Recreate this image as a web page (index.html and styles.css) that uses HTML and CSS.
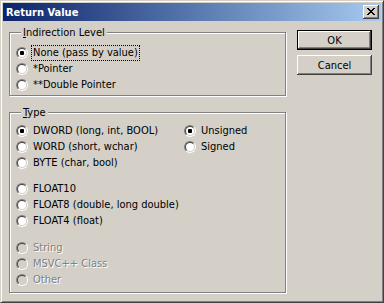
FILE: index.html
```html
<!DOCTYPE html>
<html lang="en">
<head>
  <meta charset="UTF-8">
  <meta name="viewport" content="width=device-width, initial-scale=1.0">
  <title>Return Value</title>
  <link rel="stylesheet" href="styles.css">
</head>
<body>
  <div class="window">
    <div class="titlebar">
      <span class="title">Return Value</span>
      <span class="close">
        <svg width="8" height="7" viewBox="0 0 8 7" shape-rendering="crispEdges">
          <path d="M0 0h2v1h-2zM6 0h2v1h-2zM1 1h2v1h-2zM5 1h2v1h-2zM2 2h4v1h-4zM3 3h2v1h-2zM2 4h4v1h-4zM1 5h2v1h-2zM5 5h2v1h-2zM0 6h2v1h-2zM6 6h2v1h-2z" fill="#000"/>
        </svg>
      </span>
    </div>

    <div class="body">
      <div class="groups">
        <div class="group group-indirection">
          <div class="caption"><u>I</u>ndirection Level</div>
          <div class="options">
            <div class="option"><span class="radio checked"></span><span class="label focused">None (pass by value)</span></div>
            <div class="option"><span class="radio"></span><span class="label">*Pointer</span></div>
            <div class="option"><span class="radio"></span><span class="label">**Double Pointer</span></div>
          </div>
        </div>

        <div class="group group-type">
          <div class="caption"><u>T</u>ype</div>
          <div class="type-columns">
            <div class="options type-left">
              <div class="option"><span class="radio checked"></span><span class="label">DWORD (long, int, BOOL)</span></div>
              <div class="option"><span class="radio"></span><span class="label">WORD (short, wchar)</span></div>
              <div class="option"><span class="radio"></span><span class="label">BYTE (char, bool)</span></div>
              <div class="option break"><span class="radio"></span><span class="label">FLOAT10</span></div>
              <div class="option"><span class="radio"></span><span class="label">FLOAT8 (double, long double)</span></div>
              <div class="option"><span class="radio"></span><span class="label">FLOAT4 (float)</span></div>
              <div class="option disabled break-lg"><span class="radio"></span><span class="label">String</span></div>
              <div class="option disabled"><span class="radio"></span><span class="label">MSVC++ Class</span></div>
              <div class="option disabled"><span class="radio"></span><span class="label">Other</span></div>
            </div>
            <div class="options">
              <div class="option"><span class="radio checked"></span><span class="label">Unsigned</span></div>
              <div class="option"><span class="radio"></span><span class="label">Signed</span></div>
            </div>
          </div>
        </div>
      </div>

      <div class="buttons">
        <button class="btn default">OK</button>
        <button class="btn">Cancel</button>
      </div>
    </div>
  </div>
</body>
</html>
```

FILE: styles.css
```css
* {
  box-sizing: border-box;
}
body {
  margin: 0;
  background: #d4d0c8;
  font-family: "DejaVu Sans Condensed", "Liberation Sans", sans-serif;
  font-size: 11px;
  color: #000;
}
.window {
  width: 384px;
  height: 303px;
  padding: 2px;
  border: 1px solid;
  border-color: #d4d0c8 #404040 #404040 #d4d0c8;
  box-shadow: inset 1px 1px #fff, inset -1px -1px #808080;
}
.titlebar {
  height: 18px;
  display: flex;
  align-items: center;
  justify-content: space-between;
  padding: 0 2px 0 3px;
  background: linear-gradient(to right, #0a246a, #a6caf0);
}
.title {
  color: #fff;
  font-weight: bold;
}
.close {
  width: 16px;
  height: 14px;
  display: flex;
  align-items: center;
  justify-content: center;
  padding-bottom: 1px;
  background: #d4d0c8;
  box-shadow: inset -1px -1px #404040, inset 1px 1px #fff, inset -2px -2px #808080;
}
.body {
  display: flex;
  padding: 9px 9px 0 6px;
}
.groups {
  width: 277px;
  margin-top: 2px;
  display: flex;
  flex-direction: column;
  gap: 16px;
}
.group {
  border: 1px solid #808080;
  box-shadow: inset 1px 1px #fff, 1px 1px #fff;
  padding: 0 0 2px 6px;
}
.group-type {
  padding-bottom: 4px;
}
.caption {
  width: fit-content;
  height: 13px;
  line-height: 13px;
  margin: -7px 0 0 5px;
  padding: 0 2px;
  background: #d4d0c8;
}
.group-indirection .options {
  margin-top: 6px;
}
.type-columns {
  display: flex;
  margin-top: 4px;
}
.type-left {
  width: 168px;
}
.option {
  display: flex;
  align-items: center;
  height: 16px;
}
.option.break {
  margin-top: 10px;
}
.option.break-lg {
  margin-top: 11px;
}
.radio {
  flex: none;
  display: flex;
  width: 12px;
  height: 12px;
  border-radius: 50%;
  border: 1px solid;
  border-color: #808080 #fff #fff #808080;
}
.radio::before {
  content: "";
  flex: 1;
  border-radius: 50%;
  border: 1px solid;
  border-color: #404040 #d4d0c8 #d4d0c8 #404040;
  background: #fff;
}
.radio.checked::before {
  background: radial-gradient(circle, #000 0 2px, #fff 2.5px);
}
.label {
  margin-left: 4px;
  padding: 1px 1px;
  line-height: 12px;
  white-space: nowrap;
}
.label.focused {
  outline: 1px dotted #000;
}
.disabled .radio::before {
  background: #d4d0c8;
}
.disabled .label {
  color: #808080;
  text-shadow: 1px 1px 0 #fff;
}
.buttons {
  margin-left: 11px;
  display: flex;
  flex-direction: column;
  gap: 5px;
}
.btn {
  width: 75px;
  height: 20px;
  padding: 0;
  border: none;
  font: inherit;
  color: #000;
  background: #d4d0c8;
  box-shadow: inset -1px -1px #404040, inset 1px 1px #fff, inset -2px -2px #808080;
}
.btn.default {
  border: 1px solid #000;
}
```
